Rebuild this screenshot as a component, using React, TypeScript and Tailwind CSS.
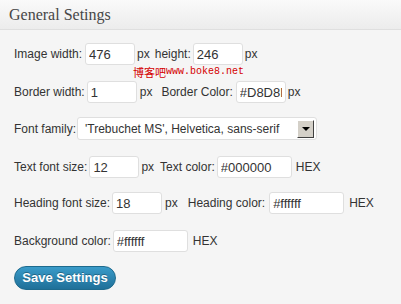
import React from "react";

const font = { fontFamily: '"Liberation Sans", Arial, sans-serif' };

function Field({ value, width }: { value: string; width: string }) {
    return (
        <input
            readOnly
            value={value}
            className={`${width} h-[22px] bg-white border border-[#dfdfdf] rounded-[3px] px-[3px] text-[13px] text-[#333] outline-none`}
            style={font}
        />
    );
}

export default function App() {
    return (
        <div className="relative w-[401px] h-[304px] bg-[#f5f5f5] text-[12px] text-[#333] overflow-hidden" style={font}>
            <div className="h-[30px] bg-gradient-to-b from-[#fafafa] to-[#ececec] border-b border-[#dfdfdf] flex items-center pl-[9px]">
                <h2 className="text-[16px] text-[#464646]" style={{ fontFamily: '"Liberation Serif", Georgia, serif' }}>
                    General Setings
                </h2>
            </div>

            <div className="pl-[14px] pt-[13px]">
                <div className="flex items-center h-[22px]">
                    <span>Image width:</span>
                    <span className="ml-[3px]"><Field value="476" width="w-[50px]" /></span>
                    <span className="ml-[2px]">px</span>
                    <span className="ml-[5px]">height:</span>
                    <span className="ml-[2px]"><Field value="246" width="w-[50px]" /></span>
                    <span className="ml-[2px]">px</span>
                </div>

                <div className="flex items-center h-[22px] mt-[16px]">
                    <span>Border width:</span>
                    <span className="ml-[2px]"><Field value="1" width="w-[50px]" /></span>
                    <span className="ml-[3px]">px</span>
                    <span className="ml-[9px]">Border Color:</span>
                    <span className="ml-[3px]"><Field value="#D8D8D8" width="w-[50px]" /></span>
                    <span className="ml-[2px]">px</span>
                </div>

                <div className="flex items-center h-[23px] mt-[14px]">
                    <span>Font family:</span>
                    <div className="ml-[1px] w-[240px] h-[23px] bg-white border border-[#dfdfdf] rounded-[3px] flex items-center pl-[7px] pr-[2px]">
                        <span className="flex-1 text-[12px] whitespace-nowrap overflow-hidden">'Trebuchet MS', Helvetica, sans-serif</span>
                        <div className="w-[17px] h-[18px] bg-[#d4d0c8] border border-t-white border-l-white border-r-[#404040] border-b-[#404040] flex items-center justify-center">
                            <div className="w-0 h-0 border-l-[4px] border-r-[4px] border-t-[4px] border-l-transparent border-r-transparent border-t-black" />
                        </div>
                    </div>
                </div>

                <div className="flex items-center h-[22px] mt-[16px]">
                    <span>Text font size:</span>
                    <span className="ml-[2px]"><Field value="12" width="w-[50px]" /></span>
                    <span className="ml-[2px]">px</span>
                    <span className="ml-[6px]">Text color:</span>
                    <span className="ml-[2px]"><Field value="#000000" width="w-[75px]" /></span>
                    <span className="ml-[4px]">HEX</span>
                </div>

                <div className="flex items-center h-[22px] mt-[14px]">
                    <span>Heading font size:</span>
                    <span className="ml-[2px]"><Field value="18" width="w-[50px]" /></span>
                    <span className="ml-[3px]">px</span>
                    <span className="ml-[10px]">Heading color:</span>
                    <span className="ml-[4px]"><Field value="#ffffff" width="w-[75px]" /></span>
                    <span className="ml-[5px]">HEX</span>
                </div>

                <div className="flex items-center h-[22px] mt-[16px]">
                    <span>Background color:</span>
                    <span className="ml-[2px]"><Field value="#ffffff" width="w-[75px]" /></span>
                    <span className="ml-[5px]">HEX</span>
                </div>

                <button
                    className="mt-[14px] w-[102px] h-[24px] rounded-full bg-gradient-to-b from-[#3a9bc9] to-[#1f7099] border border-[#1e6a8d] text-white font-bold text-[13px] [text-shadow:0_-1px_0_rgba(0,0,0,0.3)]"
                    style={font}
                >
                    Save Settings
                </button>
            </div>

            <div className="absolute left-[133px] top-[64px] text-[#d40000] whitespace-nowrap leading-[16px] flex items-center">
                <span className="text-[11px]" style={{ fontFamily: '"Noto Sans CJK SC", sans-serif' }}>博客吧</span>
                <span className="text-[10px]" style={{ fontFamily: '"Liberation Mono", monospace' }}>www.boke8.net</span>
            </div>
        </div>
    );
}
